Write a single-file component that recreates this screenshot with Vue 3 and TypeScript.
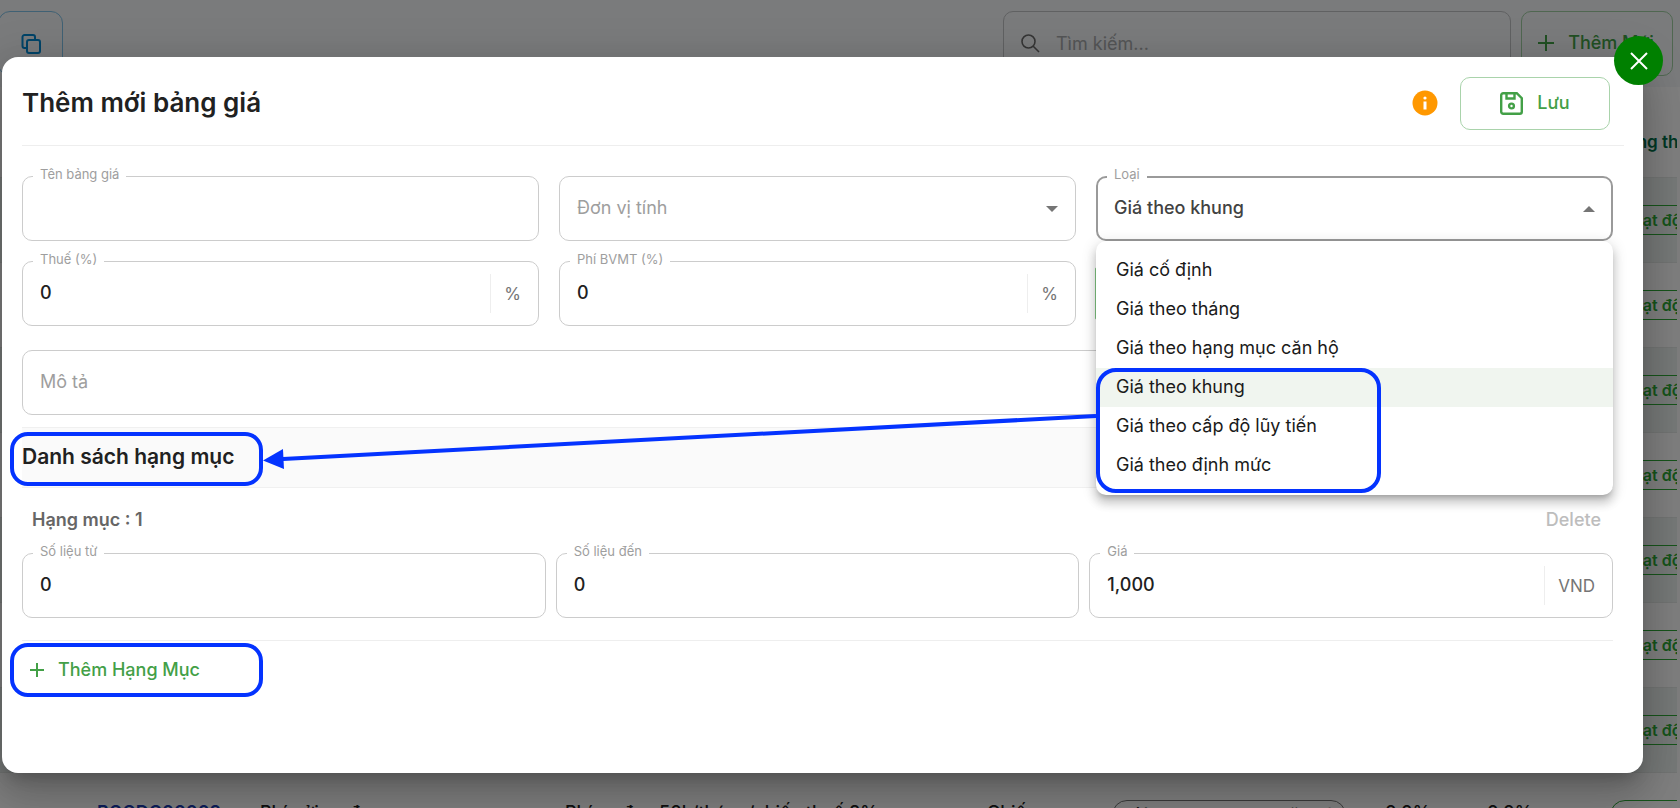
<script setup lang="ts">
import { ref } from 'vue'

interface PriceRow {
  code: string
  name: string
  note: string
  unit: string
  kind: string
  tax: string
  fee: string
}

const kinds: string[] = [
  'Giá cố định',
  'Giá theo tháng',
  'Giá theo hạng mục căn hộ',
  'Giá theo khung',
  'Giá theo cấp độ lũy tiến',
  'Giá theo định mức',
]

const kind = ref('Giá theo khung')
const priceName = ref('')
const unit = ref('')
const tax = ref('0')
const fee = ref('0')
const description = ref('')
const from = ref('0')
const to = ref('0')
const price = ref('1,000')
const search = ref('')

const emptyRow: PriceRow = { code: '', name: '', note: '', unit: '', kind: '', tax: '', fee: '' }
const rows: PriceRow[] = [
  ...Array.from({ length: 7 }, () => emptyRow),
  {
    code: 'BGGDC00003',
    name: 'Phí gửi xe đạp',
    note: 'Phí xe đạp 50k/tháng/chiếc thuế 8%',
    unit: 'Chiếc',
    kind: 'Giá theo hạng mục căn hộ',
    tax: '0.0%',
    fee: '0.0%',
  },
]
</script>

<template>
  <div class="app">
    <div class="page">
      <header class="toolbar">
        <button class="copy" type="button" aria-label="Sao chép">
          <svg width="20" height="20" viewBox="0 0 20 20" fill="none" stroke="#0288d1" stroke-width="2">
            <rect x="6" y="6" width="13" height="13" rx="2" />
            <path d="M5 14H3.500a2 2 0 0 1-2-2V3a2 2 0 0 1 2-2H12a2 2 0 0 1 2 2v2" />
          </svg>
        </button>
        <label class="search">
          <svg width="19" height="19" viewBox="0 0 19 19" fill="none" stroke="#6b6b6b" stroke-width="1.600">
            <circle cx="7.500" cy="7.500" r="6.500" />
            <path d="M12 12l6 6" />
          </svg>
          <input v-model="search" type="text" placeholder="Tìm kiếm..." aria-label="Tìm kiếm" />
        </label>
        <button class="create" type="button">
          <svg width="16" height="16" viewBox="0 0 16 16" stroke="currentColor" stroke-width="2">
            <path d="M8 0v16M0 8h16" />
          </svg>
          Thêm Mới
        </button>
      </header>
      <div class="list">
        <table>
          <colgroup>
            <col class="c-code" /><col class="c-name" /><col class="c-note" /><col class="c-unit" />
            <col class="c-kind" /><col class="c-tax" /><col class="c-fee" /><col />
          </colgroup>
          <thead>
            <tr>
              <th colspan="7"></th>
              <th>Trạng thái</th>
            </tr>
          </thead>
          <tbody>
            <tr v-for="(row, i) in rows" :key="i">
              <td class="code">{{ row.code }}</td>
              <td>{{ row.name }}</td>
              <td>{{ row.note }}</td>
              <td>{{ row.unit }}</td>
              <td class="tag"><span v-if="row.kind" class="chip">{{ row.kind }}</span></td>
              <td>{{ row.tax }}</td>
              <td>{{ row.fee }}</td>
              <td class="tag"><span class="chip status">Hoạt động</span></td>
            </tr>
          </tbody>
        </table>
      </div>
    </div>

    <div class="backdrop">
      <section class="dialog" role="dialog" aria-labelledby="dialog-title">
        <button class="close" type="button" aria-label="Đóng">
          <svg width="18" height="18" viewBox="0 0 18 18" stroke="#fff" stroke-width="2">
            <path d="M1 1l16 16M17 1L1 17" />
          </svg>
        </button>

        <header class="head">
          <h1 id="dialog-title">Thêm mới bảng giá</h1>
          <svg class="info" width="26" height="26" viewBox="0 0 26 26">
            <circle cx="13" cy="13" r="12.500" fill="#ff9800" />
            <path d="M13 11.500v8" stroke="#fff" stroke-width="3" />
            <circle cx="13" cy="8" r="1.600" fill="#fff" />
          </svg>
          <button class="save" type="button">
            <svg width="23" height="23" viewBox="0 0 23 23" fill="none" stroke="currentColor" stroke-width="2.400">
              <path d="M3.200 1.200h13.600l5 5v13.600a2 2 0 0 1-2 2H3.200a2 2 0 0 1-2-2V3.200a2 2 0 0 1 2-2z" />
              <path d="M6.500 1v5.500h8V1" />
              <circle cx="11.500" cy="14" r="2.400" />
            </svg>
            Lưu
          </button>
        </header>

        <div class="grid">
          <div class="field">
            <label for="name">Tên bảng giá</label>
            <input id="name" v-model="priceName" type="text" />
          </div>
          <div class="field">
            <select v-model="unit" class="empty" aria-label="Đơn vị tính">
              <option value="">Đơn vị tính</option>
            </select>
            <svg class="caret" width="12" height="6" viewBox="0 0 12 6"><path d="M0 0h12L6 6z" fill="#757575" /></svg>
          </div>
          <div class="field open">
            <label for="kind">Loại</label>
            <select id="kind" v-model="kind">
              <option v-for="k in kinds" :key="k">{{ k }}</option>
            </select>
            <svg class="caret" width="12" height="6" viewBox="0 0 12 6"><path d="M0 6h12L6 0z" fill="#757575" /></svg>
            <ul class="menu" role="listbox" aria-label="Loại">
              <li
                v-for="k in kinds"
                :key="k"
                role="option"
                :aria-selected="k === kind"
                :class="{ selected: k === kind }"
                @click="kind = k"
              >
                {{ k }}
              </li>
            </ul>
          </div>

          <div class="field">
            <label for="tax">Thuế (%)</label>
            <input id="tax" v-model="tax" type="text" />
            <span class="unit">%</span>
          </div>
          <div class="field">
            <label for="fee">Phí BVMT (%)</label>
            <input id="fee" v-model="fee" type="text" />
            <span class="unit">%</span>
          </div>
          <div class="panel"></div>
        </div>

        <div class="field about">
          <input v-model="description" type="text" placeholder="Mô tả" aria-label="Mô tả" />
        </div>

        <div class="band">
          <h2>Danh sách hạng mục</h2>
          <span class="ring"></span>
        </div>

        <div class="item-head">
          <h3>Hạng mục : 1</h3>
          <button class="delete" type="button" disabled>Delete</button>
        </div>
        <div class="grid tight">
          <div class="field">
            <label for="from">Số liệu từ</label>
            <input id="from" v-model="from" type="text" />
          </div>
          <div class="field">
            <label for="to">Số liệu đến</label>
            <input id="to" v-model="to" type="text" />
          </div>
          <div class="field">
            <label for="price">Giá</label>
            <input id="price" v-model="price" type="text" />
            <span class="unit">VND</span>
          </div>
        </div>

        <div class="more">
          <button class="add" type="button">
            <svg width="14" height="14" viewBox="0 0 14 14" stroke="currentColor" stroke-width="2">
              <path d="M7 0v14M0 7h14" />
            </svg>
            Thêm Hạng Mục
          </button>
          <span class="ring"></span>
        </div>

        <svg class="arrow" viewBox="0 0 834 60" preserveAspectRatio="none">
          <path d="M20 49L834 6" stroke="#0433ff" stroke-width="4" />
          <path d="M0 50.500L20 39l1 20z" fill="#0433ff" />
        </svg>
      </section>
    </div>
  </div>
</template>

<style>
body {
  margin: 0;
}
</style>

<style scoped>
.app {
  position: relative;
  height: 100vh;
  overflow: hidden;
  background: #fff;
  color: #212121;
  font: 500 18px/24px Inter, 'Noto Sans', sans-serif;
}
.app * {
  box-sizing: border-box;
}
h1,
h2,
h3,
ul {
  margin: 0;
  padding: 0;
}
button,
input,
select {
  font: inherit;
  color: inherit;
}
button {
  display: flex;
  align-items: center;
  justify-content: center;
  padding: 0;
  background: none;
  border: 0;
  white-space: nowrap;
}

/* Price list page */
.toolbar {
  display: flex;
  gap: 10px;
  height: 87px;
  margin-left: -2px;
  padding: 11px 7px 11px 0;
  background: #f4f6f8;
}
.copy {
  width: 65px;
  margin-right: auto;
  border: 1px solid #81c3e8;
  border-radius: 12px;
}
.search {
  display: flex;
  flex: 0 0 508px;
  align-items: center;
  gap: 16px;
  padding: 0 17px;
  border: 1px solid #c0c2c4;
  border-radius: 10px;
}
.search input {
  flex: 1;
  min-width: 0;
  padding: 0;
  border: 0;
  outline: 0;
  background: none;
  font-weight: 400;
}
.search input::placeholder {
  color: #a8aaac;
  opacity: 1;
}
.create {
  width: 152px;
  gap: 14px;
  padding: 0 2px 2px 0;
  border: 1px solid #a0cfa3;
  border-radius: 10px;
  color: #43a047;
}
.list {
  margin-right: 3px;
  padding-top: 16px;
  overflow: hidden;
}
table {
  width: 100%;
  table-layout: fixed;
  border-collapse: separate;
  border-spacing: 0;
}
.c-code {
  width: 244px;
}
.c-name {
  width: 305px;
}
.c-note {
  width: 422px;
}
.c-unit {
  width: 125px;
}
.c-kind {
  width: 273px;
}
.c-tax {
  width: 102px;
}
.c-fee {
  width: 123px;
}
th,
td {
  height: 85px;
  padding: 0 0 4px 16px;
  text-align: left;
  vertical-align: middle;
  white-space: nowrap;
  border-bottom: 1px solid #e4e8e6;
}
th {
  height: 75px;
  padding: 4px 0 0 16px;
  color: #00704a;
  font-size: 17px;
  font-weight: 600;
}
tbody tr:nth-child(odd) {
  background: #edf2f0;
}
.code {
  padding-left: 97px;
  color: #1a3bb5;
  font-weight: 600;
}
.tag {
  padding-bottom: 0;
}
.chip {
  display: block;
  width: fit-content;
  padding: 0 10px;
  border: 1px solid #777;
  border-radius: 16px;
  line-height: 28px;
  font-size: 17px;
}
.status {
  border-color: #2ea836;
  color: #2ea836;
  font-size: 16px;
  font-weight: 600;
}

/* Dialog */
.backdrop {
  position: absolute;
  inset: 0;
  display: flex;
  padding: 57px 37px 35px 2px;
  background: rgba(0, 0, 0, 0.5);
}
.dialog {
  position: relative;
  flex: 1;
  padding: 0 30px 0 20px;
  background: #fff;
  border-radius: 16px;
  box-shadow:
    0 11px 15px -7px rgba(0, 0, 0, 0.2),
    0 24px 38px 3px rgba(0, 0, 0, 0.14),
    0 9px 46px 8px rgba(0, 0, 0, 0.12);
}
.close {
  position: absolute;
  top: -21px;
  right: -20px;
  width: 49px;
  height: 49px;
  border-radius: 50%;
  background: #008000;
}
.head {
  display: flex;
  align-items: center;
  height: 89px;
  margin-right: -11px;
  padding: 4px 14px 0 0;
  border-bottom: 1px solid #eee;
}
h1 {
  flex: 1;
  font-size: 26px;
  line-height: 36px;
  font-weight: 600;
}
.save {
  width: 150px;
  height: 53px;
  margin-left: 22px;
  gap: 14px;
  border: 1px solid #a9d3ab;
  border-radius: 10px;
  color: #43a047;
}
.grid {
  display: grid;
  grid-template-columns: repeat(3, 1fr);
  gap: 20px;
  margin-top: 30px;
}
.field {
  position: relative;
  display: flex;
  align-items: center;
  height: 65px;
  border: 1px solid #ccc;
  border-radius: 10px;
}
.field label {
  position: absolute;
  top: -12px;
  left: 10px;
  padding: 0 7px;
  background: #fff;
  color: #9e9e9e;
  font-size: 13px;
  line-height: 18px;
  font-weight: 400;
}
.field input,
.field select {
  flex: 1;
  align-self: stretch;
  min-width: 0;
  padding: 0 17px 2px;
  border: 0;
  outline: 0;
  border-radius: 10px;
  background: none;
  appearance: none;
}
.field input::placeholder,
.field .empty {
  color: #9e9e9e;
  font-weight: 400;
  opacity: 1;
}
.caret {
  position: absolute;
  right: 17px;
}
.open {
  border: 2px solid #9a9a9a;
  color: #424242;
}
.open label {
  left: 9px;
  top: -13px;
}
.open select {
  padding: 0 16px 2px;
}
.open .caret {
  right: 16px;
}
.unit {
  display: flex;
  align-items: center;
  height: 39px;
  padding: 0 17px 0 13px;
  border-left: 1px solid #eee;
  color: #757575;
  font-size: 17px;
  font-weight: 400;
}
.menu {
  position: absolute;
  z-index: 2;
  top: 63px;
  left: -2px;
  right: -2px;
  padding: 10px 0;
  list-style: none;
  background: #fff;
  border-radius: 10px;
  color: #1a1a1a;
  font-weight: 400;
  box-shadow:
    0 5px 5px -3px rgba(0, 0, 0, 0.2),
    0 8px 10px 1px rgba(0, 0, 0, 0.14),
    0 3px 14px 2px rgba(0, 0, 0, 0.12);
}
.menu li {
  padding: 0 20px 2px;
  line-height: 37px;
}
.menu .selected {
  background: #f0f5ef;
}
.menu::after {
  content: '';
  position: absolute;
  top: 127px;
  left: 0;
  width: 277px;
  bottom: 2px;
  border: 4px solid #0433ff;
  border-radius: 20px;
}
.panel {
  align-self: center;
  height: 53px;
  margin-left: -1px;
  border: 1px solid #81c784;
  border-radius: 2px;
}
.about {
  margin-top: 24px;
}
.band {
  position: relative;
  display: flex;
  align-items: center;
  height: 61px;
  margin-top: 12px;
  padding-bottom: 2px;
  border: solid #f0f0f0;
  border-width: 1px 0;
  background: #fafafa;
}
h2 {
  font-size: 21px;
  line-height: 30px;
  font-weight: 600;
}
.ring {
  position: absolute;
  top: 4px;
  left: -12px;
  width: 253px;
  height: 54px;
  border: 4px solid #0433ff;
  border-radius: 18px;
  pointer-events: none;
}
.item-head {
  display: flex;
  align-items: center;
  justify-content: space-between;
  height: 65px;
  padding: 0 12px 2px 10px;
}
h3 {
  color: #666;
  font-size: 18px;
  font-weight: 600;
}
.delete {
  color: #bdbdbd;
}
.tight {
  gap: 10px;
  margin-top: 0;
}
.more {
  position: relative;
  margin-top: 22px;
  padding: 17px 8px;
  border-top: 1px solid #eee;
}
.more .ring {
  top: 2px;
}
.add {
  gap: 14px;
  color: #43a047;
}
.arrow {
  position: absolute;
  z-index: 3;
  top: 353px;
  left: 261px;
  width: calc(100% - 808px);
  height: 60px;
  overflow: visible;
  pointer-events: none;
}
</style>
